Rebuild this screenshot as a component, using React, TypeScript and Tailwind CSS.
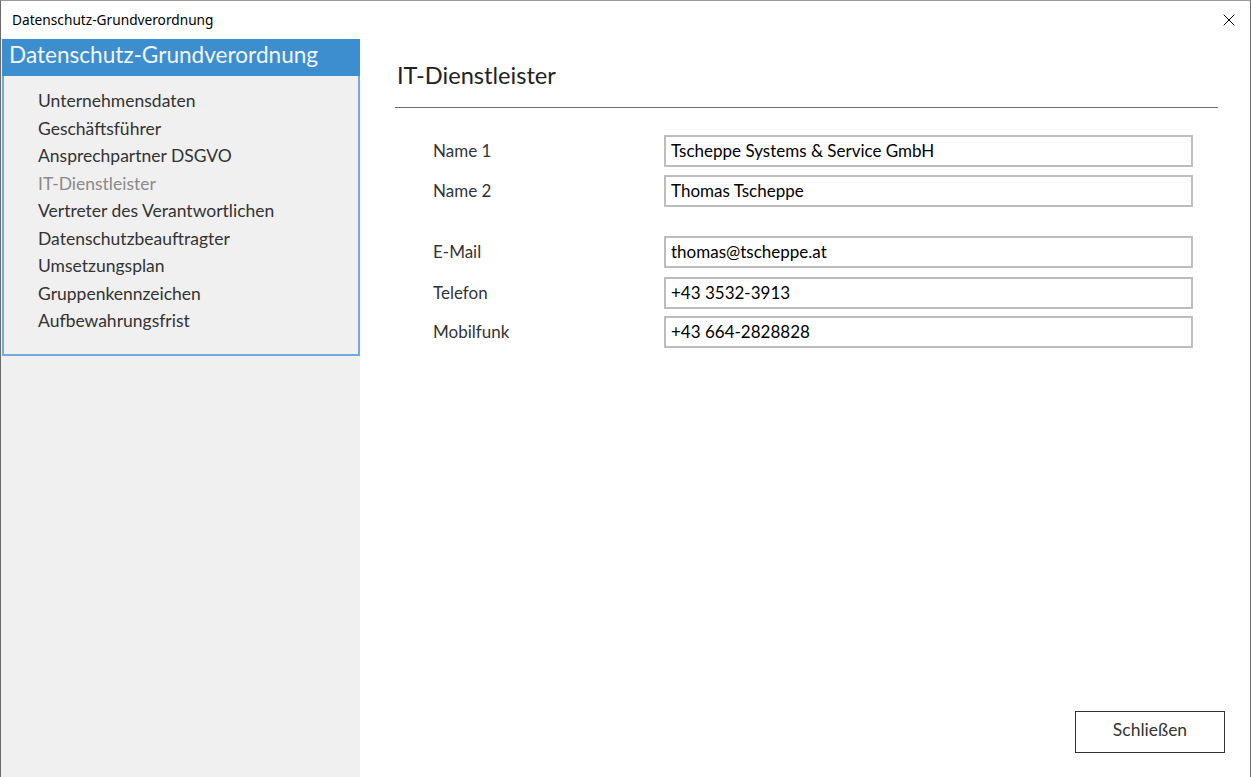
import { X } from 'lucide-react';

const navItems = [
  'Unternehmensdaten',
  'Geschäftsführer',
  'Ansprechpartner DSGVO',
  'IT-Dienstleister',
  'Vertreter des Verantwortlichen',
  'Datenschutzbeauftragter',
  'Umsetzungsplan',
  'Gruppenkennzeichen',
  'Aufbewahrungsfrist',
];

const fields = [
  { label: 'Name 1', value: 'Tscheppe Systems & Service GmbH', mt: 'mt-[27px]' },
  { label: 'Name 2', value: 'Thomas Tscheppe', mt: 'mt-[8px]' },
  { label: 'E-Mail', value: 'thomas@tscheppe.at', mt: 'mt-[29px]' },
  { label: 'Telefon', value: '+43 3532-3913', mt: 'mt-[9px]' },
  { label: 'Mobilfunk', value: '+43 664-2828828', mt: 'mt-[7px]' },
];

export default function App() {
  return (
    <div
      className="flex h-[777px] w-[1251px] flex-col border-x border-t border-x-[#6b6b6b] border-t-[#9a9a9a] bg-white"
      style={{ fontFamily: 'Lato, "Noto Sans", sans-serif' }}
    >
      {/* title bar */}
      <div className="flex h-[38px] items-center justify-between bg-white pl-[11px] pr-[11px]">
        <span className="text-[13.7px] text-black" style={{ fontFamily: '"Noto Sans", sans-serif' }}>
          Datenschutz-Grundverordnung
        </span>
        <X className="h-[20px] w-[20px] text-black" strokeWidth={1.2} />
      </div>

      <div className="flex flex-1">
        {/* left panel */}
        <div className="flex w-[359px] flex-col bg-[#f0f0f0] pl-px">
          <div className="flex h-[37px] items-center bg-[#3d8ecf] pb-[5px] pl-[7px] text-[22.6px] text-[#f2f6fa]">
            Datenschutz-Grundverordnung
          </div>
          <div className="h-[280px] border-2 border-t-0 border-[#72aade] pl-[34px] pt-[11px]">
            {navItems.map((item) => (
              <div
                key={item}
                className={`text-[17.5px] leading-[27.5px] ${item === 'IT-Dienstleister' ? 'text-[#8a8a8a]' : 'text-[#333]'}`}
              >
                {item}
              </div>
            ))}
          </div>
        </div>

        {/* right panel */}
        <div className="relative flex flex-1 flex-col bg-white">
          <div className="pl-[37px] pt-[21px] text-[23.6px] leading-[30px] text-[#222]">IT-Dienstleister</div>
          <div className="ml-[35px] mr-[32px] mt-[17px] h-px bg-[#6e6e6e]" />

          <div className="flex flex-col pl-[73px]">
            {fields.map((f) => (
              <div key={f.label} className={`flex items-center ${f.mt}`}>
                <div className="w-[231px] text-[17px] text-[#333]">{f.label}</div>
                <div className="flex h-[32px] w-[529px] items-center border-2 border-[#bdbdbd] pb-px pl-[5px] text-[17px] text-black">
                  {f.value}
                </div>
              </div>
            ))}
          </div>

          <div className="mt-auto flex justify-end pb-[24px] pr-[25px]">
            <button className="h-[42px] w-[150px] border border-[#333] bg-white pb-[3px] text-[17.5px] text-[#333]">
              Schließen
            </button>
          </div>
        </div>
      </div>
    </div>
  );
}
